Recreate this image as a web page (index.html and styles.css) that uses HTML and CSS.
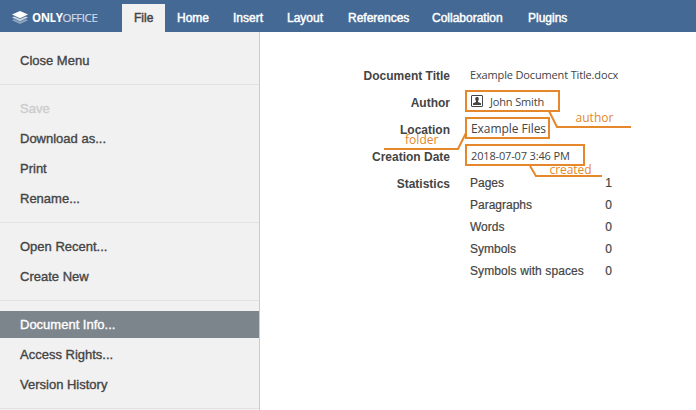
FILE: index.html
```html
<!DOCTYPE html>
<html lang="en">
<head>
<meta charset="utf-8">
<title>Document Info</title>
<link rel="stylesheet" href="styles.css">
</head>
<body>
<div class="app">
<header class="header">
  <div class="logo">
    <svg class="logo-mark" width="16" height="14" viewBox="0 0 16 14">
      <path d="M0 9.2 2.2 8.3 8 10.8 13.8 8.3 16 9.2 8 13z" fill="#8fa5bf"/>
      <path d="M0 6.4 2.2 5.5 8 8.1 13.8 5.5 16 6.4 8 10.2z" fill="#cbd5e1"/>
      <path d="M0 3.5 8 0 16 3.5 8 7.3z" fill="#fff"/>
    </svg>
    <span class="logo-text"><b>ONLY</b><span class="logo-light">OFFICE</span></span>
  </div>
  <nav class="tabs">
    <a class="tab file active">File</a>
    <a class="tab home">Home</a>
    <a class="tab insert">Insert</a>
    <a class="tab layout">Layout</a>
    <a class="tab references">References</a>
    <a class="tab collaboration">Collaboration</a>
    <a class="tab plugins">Plugins</a>
  </nav>
</header>
<div class="main">
  <aside class="menu">
    <div class="group"><a class="item">Close Menu</a></div>
    <div class="group">
      <a class="item disabled">Save</a>
      <a class="item">Download as...</a>
      <a class="item">Print</a>
      <a class="item">Rename...</a>
    </div>
    <div class="group">
      <a class="item">Open Recent...</a>
      <a class="item">Create New</a>
    </div>
    <div class="group">
      <a class="item selected">Document Info...</a>
      <a class="item">Access Rights...</a>
      <a class="item">Version History</a>
    </div>
  </aside>
  <section class="info">
    <dl class="fields">
      <dt>Document Title</dt><dd class="title">Example Document Title.docx</dd>
      <dt>Author</dt>
      <dd><span class="box author">
        <svg width="12" height="12" viewBox="0 0 12 12"><rect x=".5" y=".5" width="11" height="11" rx=".5" fill="#fff" stroke="#444"/><path d="M4.2 3.5C4.2 1.5 7.8 1.5 7.8 3.5 7.8 5 7.2 5.5 7 6.3V7L10 8.2V10H2V8.2L5 7V6.3C4.8 5.5 4.2 5 4.2 3.5z" fill="#444"/></svg>
        <span class="name">John Smith</span></span></dd>
      <dt>Location</dt><dd><span class="box folder">Example Files</span></dd>
      <dt>Creation Date</dt><dd><span class="box created">2018-07-07 3:46 PM</span></dd>
      <dt>Statistics</dt>
      <dd>
        <div class="stat"><span>Pages</span><span>1</span></div>
        <div class="stat"><span>Paragraphs</span><span>0</span></div>
        <div class="stat"><span>Words</span><span>0</span></div>
        <div class="stat"><span>Symbols</span><span>0</span></div>
        <div class="stat last"><span>Symbols with spaces</span><span>0</span></div>
      </dd>
    </dl>
    <svg class="callouts" width="436" height="378" viewBox="260 32 436 378">
      <g fill="none" stroke="#e5882b" stroke-width="2">
        <path d="M549 111 557 127H631"/>
        <path d="M466 133 458 149H384"/>
        <path d="M530 166 536 176H602"/>
      </g>
      <g class="notes">
        <text x="575.500" y="122" textLength="38">author</text>
        <text x="405" y="144" textLength="33.500">folder</text>
        <text x="549.500" y="174" textLength="42">created</text>
      </g>
    </svg>
  </section>
</div>
</div>
</body>
</html>
```
FILE: styles.css
```css
* { box-sizing: border-box; }
body { margin: 0; font: 13px/27px "Liberation Sans", Arial, sans-serif; color: #444; }
.app { width: 696px; height: 410px; overflow: hidden; }
.header { display: flex; height: 32px; background: #446995; }
.logo { display: flex; width: 122px; padding: 11px 0 0 12px; }
.logo-text { margin: 0 0 0 4px; font: 11.5px/14px "Open Sans", sans-serif; color: #fff; letter-spacing: -.45px; white-space: nowrap; }
.logo-text b { font-weight: 700; }
.logo-light { color: #d0dae6; -webkit-text-stroke: .2px currentColor; }
.tabs { display: flex; padding-top: 4px; }
.tab { height: 28px; padding-left: 12px; color: #fff; line-height: 28px; font-size: 12px; white-space: nowrap; -webkit-text-stroke: .45px currentColor; }
.tab.active { background: #f1f1f1; color: #444; }
.file { width: 43px; }
.home { width: 56px; }
.insert { width: 54px; }
.layout { width: 61px; }
.references { width: 84px; }
.collaboration { width: 96px; }
.plugins { width: 63px; }
.main { display: flex; height: 378px; }
.menu { width: 260px; padding-top: 5px; background: #f1f1f1; border-right: 1px solid #cbcbcb; overflow: hidden; }
.group { display: flex; flex-direction: column; gap: 3px; padding: 10px 0; border-bottom: 1px solid #e2e2e2; }
.item { height: 27px; padding-left: 20px; -webkit-text-stroke: .35px currentColor; }
.disabled { color: #ccc; }
.selected { background: #7d858c; color: #fff; }
.info { position: relative; flex: 1; padding-top: 30px; }
.fields { display: grid; grid-template-columns: 190px 1fr; grid-auto-rows: 27px; column-gap: 15px; margin: 0; }
dt { padding-top: 1px; text-align: right; font-weight: 700; font-size: 12px; }
dd { margin: 0; font: 11px/27px "Open Sans", sans-serif; letter-spacing: -.15px; }
.title { padding-left: 5px; line-height: 26px; }
.box { display: flex; align-items: center; height: 22px; margin-top: 1px; padding-left: 4px; border: 2px solid #e5882b; line-height: 18px; white-space: nowrap; }
.author { width: 95px; }
.author .name { margin: 1px 0 0 7px; }
.folder { width: 85px; padding-top: 1px; font-size: 12px; letter-spacing: -.05px; }
.created { width: 120px; padding-top: 1px; }
.stat { display: flex; justify-content: space-between; width: 147px; height: 22px; padding-left: 5px; font: 12px/27px "Liberation Sans", sans-serif; letter-spacing: 0; -webkit-text-stroke: .2px currentColor; }
.last { letter-spacing: .1px; }
.callouts { position: absolute; left: 0; top: 0; }
.notes { fill: #e5882b; font: 12px "Open Sans", sans-serif; -webkit-text-stroke: .15px #e5882b; }
```
